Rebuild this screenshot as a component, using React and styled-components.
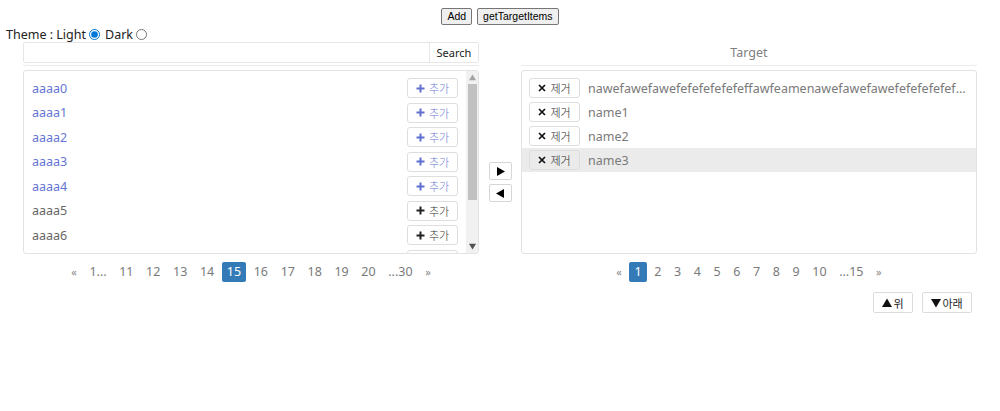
import React from 'react';
import styled, { createGlobalStyle } from 'styled-components';

const Global = createGlobalStyle`
  html, body { margin: 0; padding: 0; background: #fff; }
  body {
    font-family: "Noto Sans", "Noto Sans CJK KR", sans-serif;
    font-size: 12px;
    color: #333;
  }
  * { box-sizing: border-box; }
`;

const Page = styled.div`
  width: 1000px;
  height: 411px;
`;

const Toolbar = styled.div`
  display: flex;
  justify-content: center;
  gap: 5px;
  padding-top: 8px;
`;

const NativeButton = styled.button`
  font-family: Arial, "Liberation Sans", sans-serif;
  font-size: 10.5px;
  height: 17px;
  padding: 0 5px;
  margin: 0;
  background: #efefef;
  border: 1px solid #767676;
  border-radius: 2px;
  color: #000;
  line-height: 15px;
`;

const ThemeRow = styled.div`
  display: flex;
  align-items: center;
  height: 16px;
  padding-left: 6px;
  font-size: 12.5px;
  color: #222;
  margin-top: 1px;
`;

const Radio = styled.input.attrs({ type: 'radio' })`
  width: 11px;
  height: 11px;
  margin: 0 5px 0 3px;
  accent-color: #0078d7;
`;

const Main = styled.div`
  display: flex;
  padding: 0 23px;
`;

const Panel = styled.div`
  width: 456px;
  display: flex;
  flex-direction: column;
`;

const PanelHeader = styled.div`
  height: 24px;
  border-bottom: 1px solid #ececec;
  display: flex;
  align-items: flex-start;
  justify-content: center;
`;

const SearchBox = styled.div`
  display: flex;
  width: 100%;
  height: 21px;
  border: 1px solid #e6e6e6;
  border-radius: 2px;
`;

const SearchInput = styled.input`
  flex: 1;
  border: none;
  outline: none;
  min-width: 0;
  font-family: inherit;
  font-size: 12px;
  padding: 0 6px;
  background: transparent;
`;

const SearchButton = styled.button`
  width: 49px;
  border: none;
  border-left: 1px solid #e6e6e6;
  background: #fff;
  font-family: "Noto Sans", sans-serif;
  font-size: 11px;
  color: #222;
  padding: 0;
`;

const HeaderTitle = styled.div`
  line-height: 22px;
  font-size: 12.5px;
  color: #808080;
`;

const ListBox = styled.div`
  margin-top: 4px;
  height: 184px;
  border: 1px solid #e3e3e3;
  border-radius: 3px;
  display: flex;
  overflow: hidden;
`;

const Rows = styled.div`
  flex: 1;
  min-width: 0;
  padding-top: 5px;
  overflow: hidden;
`;

const SourceRow = styled.div`
  height: 24.5px;
  display: flex;
  align-items: center;
  justify-content: space-between;
  padding: 0 8px 0 8px;
  color: ${p => (p.$active ? '#6575d4' : '#666')};
  font-size: 12.5px;
`;

const TargetRow = styled.div`
  height: 24px;
  display: flex;
  align-items: center;
  gap: 8px;
  padding: 0 10px 0 7px;
  background: ${p => (p.$selected ? '#ebebeb' : 'transparent')};
  color: #7a7a7a;
  font-size: 12.5px;
`;

const RowText = styled.span`
  flex: 1;
  min-width: 0;
  white-space: nowrap;
  overflow: hidden;
  text-overflow: ellipsis;
`;

const ItemButton = styled.button`
  flex: none;
  width: 51px;
  height: 20px;
  padding: 0;
  border: 1px solid #dedede;
  border-radius: 3px;
  background: ${p => (p.$selected ? '#ebebeb' : '#fff')};
  display: flex;
  align-items: center;
  justify-content: center;
  gap: 4px;
  font-family: "Noto Sans CJK KR", sans-serif;
  font-size: 11px;
  font-weight: 300;
  color: ${p => p.$tone || '#333'};
`;

const ScrollBar = styled.div`
  width: 12px;
  flex: none;
  background: #f1f1f1;
  display: flex;
  flex-direction: column;
`;

const ScrollArrow = styled.div`
  height: 13px;
  display: flex;
  align-items: center;
  justify-content: center;
`;

const ScrollTrack = styled.div`
  flex: 1;
  display: flex;
  justify-content: center;
`;

const Thumb = styled.div`
  width: 9px;
  height: 116px;
  background: #c1c1c1;
`;

const Middle = styled.div`
  width: 42px;
  display: flex;
  flex-direction: column;
  align-items: center;
  gap: 4px;
  padding-top: 120px;
`;

const MoveButton = styled.button`
  width: 23px;
  height: 18px;
  padding: 0;
  border: 1px solid #d6d6d6;
  border-radius: 2px;
  background: #fff;
  display: flex;
  align-items: center;
  justify-content: center;
`;

const Pager = styled.div`
  margin-top: 8px;
  height: 20px;
  display: flex;
  justify-content: center;
  align-items: center;
`;

const PageItem = styled.span`
  height: 20px;
  line-height: 20px;
  padding: 0 5px;
  margin: 0 1.3px;
  border-radius: 2px;
  font-size: ${p => (p.$edge ? '11px' : '12.5px')};
  color: ${p => (p.$current ? '#fff' : p.$edge ? '#8a8a8a' : '#7a7a7a')};
  background: ${p => (p.$current ? '#337ab7' : 'transparent')};
`;

const BottomBar = styled.div`
  margin-top: 10px;
  display: flex;
  justify-content: flex-end;
  gap: 9px;
  padding-right: 5px;
`;

const OrderButton = styled.button`
  height: 21px;
  width: ${p => p.$w}px;
  padding: 0;
  border: 1px solid #dcdcdc;
  border-radius: 2px;
  background: #fff;
  display: flex;
  align-items: center;
  justify-content: center;
  gap: 1px;
  font-family: "Noto Sans CJK KR", sans-serif;
  font-size: 11px;
  color: #222;
`;

const Plus = ({ color }) => (
  <svg width="9" height="9" viewBox="0 0 9 9">
    <path d="M4.5 0.5v8M0.5 4.5h8" stroke={color} strokeWidth="2" />
  </svg>
);

const Cross = () => (
  <svg width="8" height="8" viewBox="0 0 8 8">
    <path d="M1 1l6 6M7 1l-6 6" stroke="#111" strokeWidth="1.7" />
  </svg>
);

const Tri = ({ dir, size = 9, color = '#000' }) => {
  const d = {
    right: 'M1 0L9 4.5L1 9Z',
    left: 'M8 0L0 4.5L8 9Z',
    up: 'M0 8L4.5 0.5L9 8Z',
    down: 'M0 1L9 1L4.5 8.5Z',
  }[dir];
  return (
    <svg width={size} height={size} viewBox="0 0 9 9">
      <path d={d} fill={color} />
    </svg>
  );
};

const sourceItems = Array.from({ length: 8 }, (_, i) => `aaaa${i}`);
const targetItems = [
  'nawefawefawefefefefefefeffawfeamenawefawefawefefefefefefeffawfeamenawefawef',
  'name1',
  'name2',
  'name3',
];

const leftPages = ['1...', '11', '12', '13', '14', '15', '16', '17', '18', '19', '20', '...30'];
const rightPages = ['1', '2', '3', '4', '5', '6', '7', '8', '9', '10', '...15'];

const Pagination = ({ pages, current }) => (
  <Pager>
    <PageItem $edge>«</PageItem>
    {pages.map(p => (
      <PageItem key={p} $current={p === current}>{p}</PageItem>
    ))}
    <PageItem $edge>»</PageItem>
  </Pager>
);

export default function App() {
  return (
    <Page>
      <Global />
      <Toolbar>
        <NativeButton>Add</NativeButton>
        <NativeButton>getTargetItems</NativeButton>
      </Toolbar>
      <ThemeRow>
        Theme : Light
        <Radio name="theme" defaultChecked />
        Dark
        <Radio name="theme" />
      </ThemeRow>
      <Main>
        <Panel>
          <PanelHeader>
            <SearchBox>
              <SearchInput />
              <SearchButton>Search</SearchButton>
            </SearchBox>
          </PanelHeader>
          <ListBox>
            <Rows>
              {sourceItems.map((name, i) => {
                const active = i < 5;
                const tone = active ? '#5f6fd0' : '#222';
                return (
                  <SourceRow key={name} $active={active}>
                    <span>{name}</span>
                    <ItemButton $tone={active ? '#6a79d4' : '#333'}>
                      <Plus color={tone} />
                      추가
                    </ItemButton>
                  </SourceRow>
                );
              })}
            </Rows>
            <ScrollBar>
              <ScrollArrow><Tri dir="up" size={7} color="#a3a3a3" /></ScrollArrow>
              <ScrollTrack><Thumb /></ScrollTrack>
              <ScrollArrow><Tri dir="down" size={7} color="#505050" /></ScrollArrow>
            </ScrollBar>
          </ListBox>
          <Pagination pages={leftPages} current="15" />
        </Panel>
        <Middle>
          <MoveButton><Tri dir="right" size={9} /></MoveButton>
          <MoveButton><Tri dir="left" size={9} /></MoveButton>
        </Middle>
        <Panel>
          <PanelHeader>
            <HeaderTitle>Target</HeaderTitle>
          </PanelHeader>
          <ListBox>
            <Rows>
              {targetItems.map((name, i) => (
                <TargetRow key={name} $selected={i === 3}>
                  <ItemButton $selected={i === 3} $tone="#222">
                    <Cross />
                    제거
                  </ItemButton>
                  <RowText>{name}</RowText>
                </TargetRow>
              ))}
            </Rows>
          </ListBox>
          <Pagination pages={rightPages} current="1" />
          <BottomBar>
            <OrderButton $w={40}><Tri dir="up" size={10} color="#111" />위</OrderButton>
            <OrderButton $w={50}><Tri dir="down" size={10} color="#111" />아래</OrderButton>
          </BottomBar>
        </Panel>
      </Main>
    </Page>
  );
}
